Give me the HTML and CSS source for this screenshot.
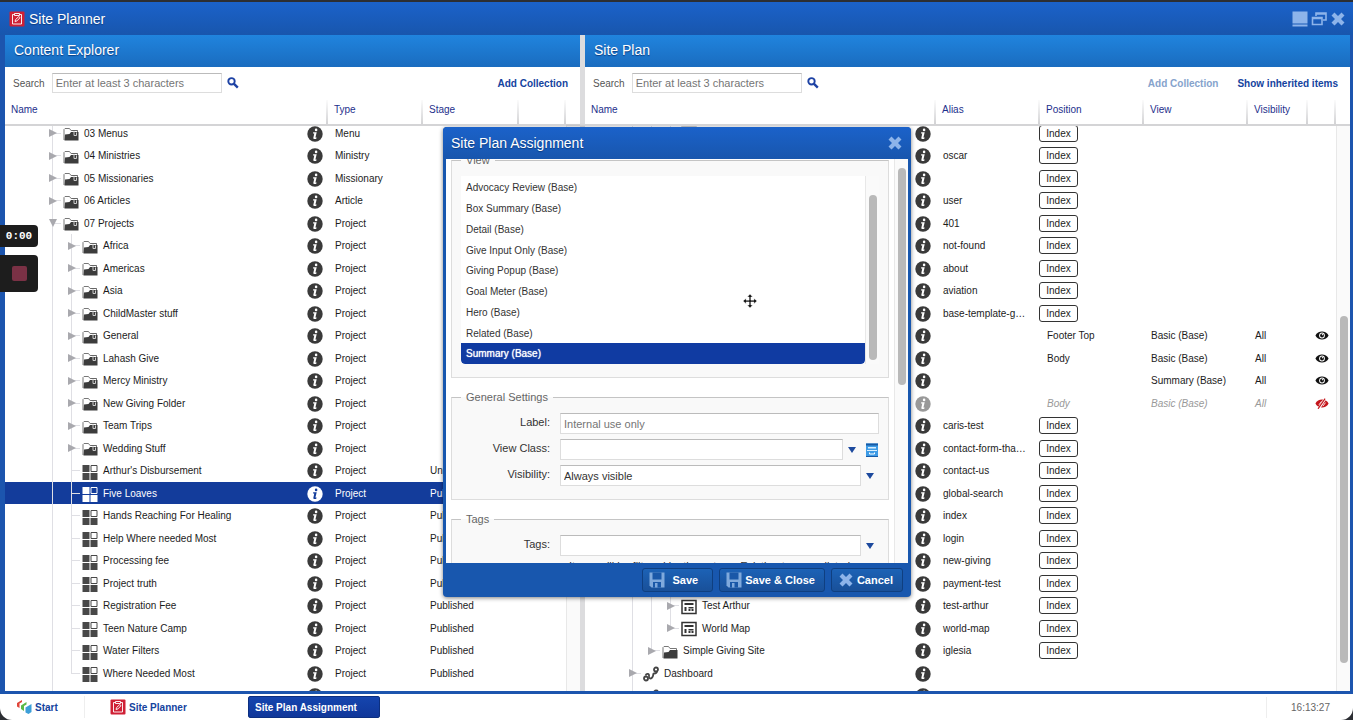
FILE: index.html
```html
<!DOCTYPE html>
<html lang="en">
  <head>
    <meta charset="UTF-8" />
    <meta name="viewport" content="width=device-width, initial-scale=1.0" />
    <title>Site Planner</title>
    <link rel="stylesheet" href="styles.css">
  </head>
  <body>
    <svg class="sprite" aria-hidden="true">
      <symbol id="i-info" viewBox="0 0 16 16">
        <circle class="disc" cx="8" cy="8" r="7.7" />
        <circle class="mark" cx="9.1" cy="3.9" r="1.3" />
        <path class="mark" d="M6.2 6.2h3.5l-1.3 5.4h1.2l-.3 1.1c-1 .5-3.2.5-3-.8l1-4.5H6z" />
      </symbol>
      <symbol id="i-folder" viewBox="0 0 16 16">
        <path d="M1 14V3.5L2 2.500h4.500L8 4.500h6.500V14" fill="#fff" stroke="#777" />
        <path d="M1.500 14.500L2 8.500l4.500-.5 1.500-2h7.500v8.500z" fill="#3c3c3c" />
      </symbol>
      <symbol id="i-collection" viewBox="0 0 16 16">
        <path d="M1 14V3.500L2 2.500h4.500L8 4.500h6.500V14" fill="#fff" stroke="#777" />
        <path d="M1.500 14.500L2 8.500l4.500-.5 1.500-2h7.500v8.500z" fill="#3c3c3c" />
        <path d="M9 4.500h5.500" stroke="#666" />
        <path d="M11 5v4.500h2.500v-3" fill="none" stroke="#ccc" />
      </symbol>
      <symbol id="i-item" viewBox="0 0 16 16">
        <path d="M.5 1h7v7h-7zM.5 9h7v7h-7zM8.500 9h7v7h-7z" fill="currentColor" />
        <path class="corner" d="M9 1.500h6v6H9z" stroke="currentColor" />
      </symbol>
      <symbol id="i-page" viewBox="0 0 16 16">
        <path d="M1 1.500h14v13H1z" fill="#fff" stroke="#333" stroke-width="1.500" />
        <path d="M3.500 4h9v2h-9zM3.500 8h2v4h-2zM7.500 8h5v1.500h-5zM7.500 10h2v2h-2zM10.500 10h2v2h-2z" fill="#333" />
      </symbol>
      <symbol id="i-link" viewBox="0 0 16 16">
        <g fill="none" stroke="#444" stroke-width="1.800">
          <circle cx="3" cy="12.500" r="2" /><circle cx="13" cy="3.500" r="2" />
          <path d="M2.500 9.500c1-2.500 4-2 3.500.5s2 3.500 3.500 1 0-3.500 1.500-3.500 3-.5 3-2.500" />
        </g>
      </symbol>
      <symbol id="i-eye" viewBox="0 0 16 12">
        <path d="M.5 6C3-.2 13-.2 15.500 6 13 12.200 3 12.200.5 6z" fill="#111" />
        <circle cx="8" cy="6" r="3.300" fill="#fff" />
        <circle cx="8" cy="6" r="2.200" fill="#111" /><circle cx="8.600" cy="5" r=".8" fill="#fff" />
      </symbol>
      <symbol id="i-eye-off" viewBox="0 0 16 12">
        <path d="M.5 6C3-.2 13-.2 15.500 6 13 12.200 3 12.200.5 6z" fill="#c4161c" />
        <path d="M4.500 7.500l3-4M9 9l3-4" stroke="#fff" stroke-width="1" />
        <path d="M3.500 13l9-14" stroke="#fff" stroke-width="3" />
        <path d="M3.500 12L11.500.5" stroke="#c4161c" stroke-width="1.400" />
      </symbol>
      <symbol id="i-search" viewBox="0 0 12 12">
        <circle cx="4.500" cy="4.300" r="3.200" fill="none" stroke="#1d42a4" stroke-width="1.900" />
        <path d="M6.800 6.600l4 4" stroke="#1d42a4" stroke-width="2.400" />
      </symbol>
      <symbol id="i-close" viewBox="0 0 16 16">
        <path d="M4.500 1.500L8 5l3.500-3.500 3 3L11 8l3.500 3.500-3 3L8 11l-3.500 3.500-3-3L5 8 1.500 4.500z" fill="#8db4ea" />
      </symbol>
      <symbol id="i-disk" viewBox="0 0 16 16">
        <path d="M.5.5h15v15h-13l-2-2z" fill="#7fa9dc" />
        <path d="M3.500.5h9v7h-9z" fill="#1a58a8" />
        <path d="M4 10h8v5.500H4z" fill="#1a58a8" /><path d="M6 11h2.500v4.500H6z" fill="#7fa9dc" />
      </symbol>
      <symbol id="i-planner" viewBox="0 0 16 16">
        <rect x=".5" y=".5" width="15" height="15" rx="1" fill="#cf2035" />
        <g fill="none" stroke="#fff" stroke-width=".9">
          <path d="M5.500 3.500H3.500v9.500h9V3.500h-2M5.500 2.500h5v2h-5z" /><path d="M6 10.500l.6-2L9.800 5.500l1.200 1.200L8 9.900z" />
        </g>
      </symbol>
      <symbol id="i-down" viewBox="0 0 10 8">
        <path d="M1 1h8L5 7z" fill="#1d4a9e" />
      </symbol>
    </svg>

    <main class="window">
      <header class="titlebar">
        <svg class="icon"><use href="#i-planner" /></svg>
        <h1>Site Planner</h1>
        <div class="window-buttons">
          <button type="button" aria-label="Minimize">
            <svg class="icon" viewBox="0 0 16 16"><path d="M.5.5h15v12H.5zM.5 13.500h15v2H.5z" fill="#8db4ea" /></svg>
          </button>
          <button type="button" aria-label="Restore">
            <svg class="icon" viewBox="0 0 16 16"><path d="M5 5V2h10v7h-3M1.500 6.500h9.500v7H1.500zM1.500 7.500h9.500M5 3h10" fill="none" stroke="#8db4ea" stroke-width="1.600" /></svg>
          </button>
          <button type="button" aria-label="Close">
            <svg class="icon"><use href="#i-close" /></svg>
          </button>
        </div>
      </header>

      <div class="panes">
        <section class="pane">
          <h2>Content Explorer</h2>
          <form class="toolbar">
            <label for="explorer-search">Search</label>
            <input id="explorer-search" type="text" placeholder="Enter at least 3 characters" />
            <button type="button" aria-label="Search"><svg><use href="#i-search" /></svg></button>
            <nav><a href="#">Add Collection</a></nav>
          </form>
          <div class="grid-area">
            <div class="scroller">
              <table>
                <colgroup>
                  <col /><col class="w95" /><col class="w96" /><col class="w47" />
                </colgroup>
                <thead>
                  <tr><th>Name</th><th>Type</th><th>Stage</th><th></th></tr>
                </thead>
                <tbody id="explorer-rows"></tbody>
              </table>
            </div>
            <div class="track"><div class="thumb explorer-thumb"></div></div>
          </div>
        </section>

        <section class="pane">
          <h2>Site Plan</h2>
          <form class="toolbar">
            <label for="plan-search">Search</label>
            <input id="plan-search" type="text" placeholder="Enter at least 3 characters" />
            <button type="button" aria-label="Search"><svg><use href="#i-search" /></svg></button>
            <nav>
              <a class="disabled" href="#">Add Collection</a>
              <a href="#">Show inherited items</a>
            </nav>
          </form>
          <div class="grid-area">
            <div class="scroller">
              <table>
                <colgroup>
                  <col /><col class="w104" /><col class="w104" /><col class="w104" /><col class="w60" /><col class="w28" />
                </colgroup>
                <thead>
                  <tr><th>Name</th><th>Alias</th><th>Position</th><th>View</th><th>Visibility</th><th></th></tr>
                </thead>
                <tbody id="plan-rows"></tbody>
              </table>
            </div>
            <div class="track"><div class="thumb plan-thumb"></div></div>
          </div>
        </section>
      </div>
    </main>

    <footer class="taskbar">
      <button type="button" class="start">
        <svg class="icon" viewBox="0 0 16 16">
          <path d="M1 6V4l5-3v2L3.500 4.500V9L1 7.500z" fill="#e0453a" />
          <path d="M5 9V6.500L10.500 3v2.500L8 7v5l-3-2z" fill="#5cb947" />
          <path d="M9.500 12V8.500L15.500 5v8l-3 2-3-1.500z" fill="#3d9fd8" />
        </svg>
        Start
      </button>
      <button type="button" class="task"><svg class="icon"><use href="#i-planner" /></svg>Site Planner</button>
      <button type="button" class="task active">Site Plan Assignment</button>
      <time>16:13:27</time>
    </footer>

    <div class="dialog" role="dialog" aria-labelledby="dialog-title">
      <header>
        <h2 id="dialog-title">Site Plan Assignment</h2>
        <button type="button" aria-label="Close"><svg class="icon"><use href="#i-close" /></svg></button>
      </header>
      <div class="dialog-body">
        <form class="settings" id="settings">
          <fieldset>
            <legend>View</legend>
            <div class="list">
              <select size="9" aria-label="View">
                <option>Advocacy Review (Base)</option>
                <option>Box Summary (Base)</option>
                <option>Detail (Base)</option>
                <option>Give Input Only (Base)</option>
                <option>Giving Popup (Base)</option>
                <option>Goal Meter (Base)</option>
                <option>Hero (Base)</option>
                <option>Related (Base)</option>
                <option selected>Summary (Base)</option>
              </select>
              <div class="track"><div class="thumb list-thumb"></div></div>
            </div>
          </fieldset>
          <fieldset>
            <legend>General Settings</legend>
            <div class="fields">
              <label for="label">Label:</label>
              <div class="field"><input id="label" type="text" placeholder="Internal use only" /></div>
              <label for="view-class">View Class:</label>
              <div class="field">
                <input id="view-class" type="text" />
                <svg class="down"><use href="#i-down" /></svg>
                <button type="button" aria-label="Browse classes">
                  <svg viewBox="0 0 14 16">
                    <path d="M1 1.500h12v13H1z" fill="#3d9be6" />
                    <path d="M1 1.500h12v2H1z" fill="#175aa6" />
                    <path d="M3 5h8v1.500H3zM2 8h10v1H2z" fill="#d9f0ff" />
                    <path d="M4.500 10.500v1.500h5v-1.500" fill="none" stroke="#fff" />
                    <path d="M1 14h12v1H1z" fill="#175aa6" />
                  </svg>
                </button>
              </div>
              <label for="visibility">Visibility:</label>
              <div class="field">
                <select id="visibility"><option>Always visible</option></select>
                <svg class="down"><use href="#i-down" /></svg>
              </div>
            </div>
          </fieldset>
          <fieldset>
            <legend>Tags</legend>
            <div class="fields">
              <label for="tags">Tags:</label>
              <div class="field">
                <input id="tags" type="text" />
                <svg class="down"><use href="#i-down" /></svg>
              </div>
              <p>Items will be filtered by these tags. Existing tags are listed.</p>
            </div>
          </fieldset>
        </form>
        <div class="track"><div class="thumb dialog-thumb"></div></div>
      </div>
      <footer>
        <button type="button" class="save"><svg class="icon"><use href="#i-disk" /></svg><span>Save</span></button>
        <button type="button"><svg class="icon"><use href="#i-disk" /></svg><span>Save &amp; Close</span></button>
        <button type="button"><svg class="icon"><use href="#i-close" /></svg><span>Cancel</span></button>
      </footer>
    </div>

    <svg class="pointer" viewBox="0 0 16 16" aria-hidden="true">
      <path d="M8 0l3 3.500H9V7h3.500V5L16 8l-3.500 3V9H9v3.500h2L8 16l-3-3.500h2V9H3.500v2L0 8l3.500-3v2H7V3.500H5z" fill="#111" stroke="#fff" stroke-width=".5" />
    </svg>

    <div class="recorder">
      <span>0:00</span>
      <button type="button" aria-label="Stop recording"></button>
    </div>

    <script src="script.js"></script>
  </body>
</html>
```
FILE: styles.css
```css
* {
  box-sizing: border-box;
  margin: 0;
}
html {
  height: 100%;
}
body {
  display: flex;
  flex-direction: column;
  position: relative;
  height: 100%;
  padding-top: 2px;
  overflow: hidden;
  background-color: #2c2e33;
  color: #1c1c1c;
  font-family: "Liberation Sans", Arial, sans-serif;
  font-size: 10px;
}
button,
input,
select {
  font: inherit;
  color: inherit;
}
button {
  border: 0;
  padding: 0;
  background: none;
}
a {
  color: #14439e;
  font-weight: bold;
  text-decoration: none;
}
h1,
h2 {
  font-size: 14px;
  font-weight: normal;
  color: #fff;
  text-shadow: 0 1px 1px #0b3c80;
}
.sprite {
  display: none;
}
.icon {
  display: block;
  flex: none;
  width: 16px;
  height: 16px;
}

/* main window */
.window {
  flex: 1;
  min-height: 0;
  display: flex;
  flex-direction: column;
  padding: 0 3px 3px 5px;
  background-color: #1c55ae;
}
.titlebar {
  display: flex;
  align-items: center;
  gap: 4px;
  height: 33px;
  margin: 0 -3px 0 -5px;
  padding: 0 7px 0 9px;
  background-image: linear-gradient(#1b62ca, #1856ad);
}
.window-buttons {
  display: flex;
  gap: 3px;
  margin-left: auto;
}
.panes {
  flex: 1;
  min-height: 0;
  display: grid;
  grid-template-columns: 575fr 765fr;
  gap: 5px;
  background-color: #dcdcde;
}
.pane {
  min-width: 0;
  min-height: 0;
  display: flex;
  flex-direction: column;
  background-color: #fff;
}
.pane h2 {
  flex: none;
  height: 32px;
  padding: 0 9px;
  line-height: 31px;
  background-image: linear-gradient(#2084de, #1a6cbf);
}
.toolbar {
  flex: none;
  display: flex;
  align-items: center;
  height: 32px;
  margin-bottom: 1px;
  padding: 0 12px 0 8px;
  color: #555;
}
.toolbar input {
  width: 170px;
  height: 20px;
  margin: 0 5px 0 7px;
}
.toolbar svg {
  display: block;
  width: 12px;
  height: 12px;
}
.toolbar nav {
  display: flex;
  gap: 19px;
  margin-left: auto;
}
.disabled {
  color: #86a3cc;
}
input,
.field select {
  min-width: 0;
  padding: 0 3px;
  border: 1px solid #ddd;
  border-top-color: #bbb;
  border-radius: 0;
  background-color: #fff;
  font-size: 11px;
}
input::placeholder {
  color: #757575;
  opacity: 1;
}

/* tree tables */
.grid-area {
  flex: 1;
  min-height: 0;
  display: flex;
  background-image: linear-gradient(#d4d4d6, #d4d4d6);
  background-size: 100% 2px;
  background-position: 0 24px;
  background-repeat: no-repeat;
}
.scroller {
  flex: 1;
  min-width: 0;
  overflow: hidden;
}
table {
  width: 100%;
  table-layout: fixed;
  border-collapse: separate;
  border-spacing: 0;
}
.w28 {
  width: 28px;
}
.w47 {
  width: 47px;
}
.w60 {
  width: 60px;
}
.w95 {
  width: 95px;
}
.w96 {
  width: 96px;
}
.w104 {
  width: 104px;
}
th {
  position: sticky;
  top: 0;
  z-index: 1;
  height: 26px;
  padding: 0 6px 6px;
  border-bottom: 2px solid #d4d4d6;
  border-right: 2px solid;
  border-image: linear-gradient(#fff, #d4d4d6 90%) 2;
  background-color: #fff;
  color: #1d2f8c;
  font-weight: normal;
  text-align: left;
}
td {
  height: 22px;
  padding: 0 0 0 7px;
  white-space: nowrap;
}
tr:nth-child(even) td {
  height: 23px;
}
td:first-child {
  padding: 0;
}
.tree {
  display: flex;
  align-items: center;
  height: 100%;
  padding: 0 5px 0 38px;
}
.guide {
  align-self: stretch;
  display: grid;
  place-items: center;
  width: 19px;
  background: linear-gradient(#dfdfe4, #dfdfe4) 9px 0 / 1px 100% no-repeat;
}
.guide.branch {
  background:
    linear-gradient(#dfdfe4, #dfdfe4) 9px 0 / 1px 100% no-repeat,
    linear-gradient(#dfdfe4, #dfdfe4) 9px 50% / 9px 1px no-repeat;
}
.guide.end {
  background-size: 1px 50%, 9px 1px;
}
.guide svg {
  width: 10px;
  height: 10px;
  fill: #a9a9ae;
}
.open svg {
  transform: rotate(90deg);
}
.tree .icon {
  margin: 2px 5px 0 1px;
  color: #484848;
}
.tree .info {
  margin: 1px 0 0 auto;
}
tr {
  --disc: #3a3a3a;
  --paper: #fff;
}
.corner,
.mark {
  fill: var(--paper);
}
.disc {
  fill: var(--disc);
}
.selected {
  --disc: #fff;
  --paper: #133c9b;
  background-color: #133c9b;
  color: #fff;
}
.selected .tree .icon {
  color: #fff;
}
.inactive {
  --disc: #999;
  color: #999;
  font-style: italic;
}
.index {
  width: 39px;
  height: 17px;
  margin-left: -8px;
  border: 1px solid #333;
  border-radius: 3px;
  line-height: 15px;
  vertical-align: middle;
}
.eye {
  display: block;
  width: 14px;
  height: 11px;
}

/* scrollbars */
.track {
  flex: none;
  width: 14px;
  border-left: 1px solid #e8e8e8;
  background-color: #fafafa;
}
.grid-area .track {
  margin-top: 26px;
}
.thumb {
  width: 8px;
  margin-left: 3px;
  border-radius: 4px;
  background-color: #b9b9b9;
}
.explorer-thumb {
  height: 200px;
  margin-top: 180px;
}
.plan-thumb {
  height: 347px;
  margin-top: 190px;
}
.list-thumb {
  height: 165px;
  margin-top: 19px;
}
.dialog-thumb {
  height: 217px;
  margin-top: 9px;
}

/* taskbar */
.taskbar {
  flex: none;
  display: flex;
  align-items: center;
  height: 26px;
  border-radius: 0 0 12px 12px;
  background-color: #fff;
  color: #14439e;
}
.taskbar button {
  display: flex;
  align-items: center;
  gap: 3px;
  height: 22px;
  font-weight: bold;
}
.start {
  width: 85px;
  padding-left: 16px;
  border-right: 1px solid #eee;
}
.task {
  width: 132px;
  margin-left: 5px;
  padding-left: 20px;
}
.taskbar .active {
  margin-left: 26px;
  padding-left: 6px;
  border: 1px solid #0c2f80;
  border-radius: 2px;
  background-image: linear-gradient(#1545ae, #10379a);
  color: #fff;
}
.taskbar time {
  margin-left: auto;
  padding: 5px 23px 5px 24px;
  border-left: 1px solid #eee;
  color: #666;
}

/* assignment dialog */
.dialog {
  position: absolute;
  top: 127px;
  left: 1px;
  right: 0;
  display: flex;
  flex-direction: column;
  width: 468px;
  height: 470px;
  margin: 0 auto;
  border-radius: 4px;
  background-color: #1857ae;
  box-shadow: 0 1px 4px rgba(0, 0, 0, 0.5);
}
.dialog > header {
  display: flex;
  align-items: center;
  justify-content: space-between;
  height: 32px;
  padding: 0 8px;
  border-radius: 4px 4px 0 0;
  background-image: linear-gradient(#1b62ca, #1856ad);
}
.dialog-body {
  flex: 1;
  min-height: 0;
  display: flex;
  margin: 0 3px;
  background-color: #fff;
}
.settings {
  flex: 1;
  overflow: hidden;
  padding: 4px 5px 40px;
  font-size: 11px;
  color: #333;
}
fieldset {
  margin-bottom: 12px;
  padding: 9px 9px 13px;
  border: 1px solid #ddd;
  border-top-color: #c4c4c4;
  background-color: #f9f9f9;
}
legend {
  padding: 0 5px;
  line-height: 14px;
  color: #666;
}
.list {
  display: flex;
  height: 188px;
}
.list select {
  flex: 1;
  min-width: 0;
  height: 188px;
  padding: 1px 0 0;
  border: 0;
  border-radius: 0 0 4px 4px;
  background-color: #fff;
  font-size: 10px;
  overflow: hidden;
  scrollbar-width: none;
}
.list option {
  height: 21px;
  min-height: 0;
  padding: 5px 5px 0;
}
.list option:nth-child(4n) {
  height: 20px;
}
.list option:checked {
  border-radius: 0 0 4px 4px;
  background: linear-gradient(#103ba2, #103ba2);
  -webkit-text-fill-color: #fff;
  text-shadow: 0 0 1px #fff;
}
.fields {
  display: grid;
  grid-template-columns: 89px 1fr;
  gap: 5px 10px;
}
.fields label {
  line-height: 19px;
  text-align: right;
}
.fields p {
  grid-column: 2;
  padding-left: 9px;
  line-height: 10px;
}
.field {
  display: flex;
  align-items: center;
  height: 21px;
}
.field input,
.field select {
  flex: 1;
  height: 21px;
}
.field select {
  appearance: none;
}
.field .down {
  width: 10px;
  height: 8px;
  margin: 0 4px;
}
.field button {
  width: 14px;
  height: 16px;
  margin-left: 4px;
}
.dialog > footer {
  display: flex;
  justify-content: flex-end;
  gap: 6px;
  padding: 5px 8px;
}
.dialog > footer button {
  display: flex;
  align-items: center;
  gap: 3px;
  height: 24px;
  padding: 0 9px 0 6px;
  border: 1px solid #0f3f80;
  border-radius: 3px;
  background-image: linear-gradient(#1c62b6, #195099);
  color: #fff;
  font-size: 11px;
  font-weight: bold;
}
.save span {
  padding: 0 5px;
}

/* things floating over everything */
.pointer {
  position: absolute;
  top: 294px;
  left: 743px;
  width: 14px;
  height: 14px;
}
.recorder {
  position: absolute;
  top: 225px;
  left: 0;
  display: grid;
  gap: 8px;
  width: 38px;
}
.recorder span,
.recorder button {
  border-radius: 0 4px 4px 0;
  background-color: #1d1d1d;
}
.recorder span {
  color: #fff;
  font: bold 11px/22px "Liberation Mono", monospace;
  text-align: center;
}
.recorder button {
  display: grid;
  place-items: center;
  height: 37px;
}
.recorder button::before {
  content: "";
  width: 15px;
  height: 15px;
  border-radius: 2px;
  background-color: #7a3145;
}
```
FILE: script.js
```js
(() => {
  // [level, icon, name, arrow, type, stage]
  const explorer = [
    [1, "collection", "03 Menus", "closed", "Menu"],
    [1, "collection", "04 Ministries", "closed", "Ministry"],
    [1, "collection", "05 Missionaries", "closed", "Missionary"],
    [1, "collection", "06 Articles", "closed", "Article"],
    [1, "collection", "07 Projects", "open", "Project"],
    [2, "collection", "Africa", "closed", "Project"],
    [2, "collection", "Americas", "closed", "Project"],
    [2, "collection", "Asia", "closed", "Project"],
    [2, "collection", "ChildMaster stuff", "closed", "Project"],
    [2, "collection", "General", "closed", "Project"],
    [2, "collection", "Lahash Give", "closed", "Project"],
    [2, "collection", "Mercy Ministry", "closed", "Project"],
    [2, "collection", "New Giving Folder", "closed", "Project"],
    [2, "collection", "Team Trips", "closed", "Project"],
    [2, "collection", "Wedding Stuff", "closed", "Project"],
    [2, "item", "Arthur's Disbursement", "", "Project", "Unpublished"],
    [2, "item", "Five Loaves", "", "Project", "Published"],
    [2, "item", "Hands Reaching For Healing", "", "Project", "Published"],
    [2, "item", "Help Where needed Most", "", "Project", "Published"],
    [2, "item", "Processing fee", "", "Project", "Published"],
    [2, "item", "Project truth", "", "Project", "Published"],
    [2, "item", "Registration Fee", "", "Project", "Published"],
    [2, "item", "Teen Nature Camp", "", "Project", "Published"],
    [2, "item", "Water Filters", "", "Project", "Published"],
    [2, "item", "Where Needed Most", "", "Project", "Published"],
    [1, "collection", "", "closed", ""],
  ];

  // [level, icon, name, arrow, alias, position, view, visibility]
  const plan = [
    [3, "page", "", "closed", "", "Index"],
    [3, "page", "", "closed", "oscar", "Index"],
    [3, "page", "", "closed", "", "Index"],
    [3, "page", "", "closed", "user", "Index"],
    [3, "page", "", "closed", "401", "Index"],
    [3, "page", "", "closed", "not-found", "Index"],
    [3, "page", "", "closed", "about", "Index"],
    [3, "page", "", "closed", "aviation", "Index"],
    [3, "page", "", "open", "base-template-g…", "Index"],
    [4, "item", "", "", "", "Footer Top", "Basic (Base)", "All"],
    [4, "item", "", "", "", "Body", "Basic (Base)", "All"],
    [4, "item", "", "", "", "", "Summary (Base)", "All"],
    [4, "item", "", "", "", "Body", "Basic (Base)", "All"],
    [3, "page", "", "closed", "caris-test", "Index"],
    [3, "page", "", "closed", "contact-form-tha…", "Index"],
    [3, "page", "", "closed", "contact-us", "Index"],
    [3, "page", "", "closed", "global-search", "Index"],
    [3, "page", "", "closed", "index", "Index"],
    [3, "page", "", "closed", "login", "Index"],
    [3, "page", "", "closed", "new-giving", "Index"],
    [3, "page", "", "closed", "payment-test", "Index"],
    [3, "page", "Test Arthur", "closed", "test-arthur", "Index"],
    [3, "page", "World Map", "closed", "world-map", "Index"],
    [2, "folder", "Simple Giving Site", "closed", "iglesia", "Index"],
    [1, "link", "Dashboard", "closed", ""],
    [1, "link", "", "closed", ""],
  ];

  const selectedRow = 16;
  const inactiveRow = 12;

  function treeCell(rows, i) {
    const [level, icon, name, arrow] = rows[i];
    const next = rows[i + 1];
    const end = next && next[0] < level ? " end" : "";
    const head = arrow ? '<svg viewBox="0 0 10 10"><path d="M1 1l8 4-8 4z"/></svg>' : "";
    return `<td><div class="tree">${'<span class="guide"></span>'.repeat(level - 1)}
      <span class="guide branch ${arrow}${end}">${head}</span>
      <svg class="icon"><use href="#i-${icon}"/></svg>${name}
      <svg class="icon info"><use href="#i-info"/></svg></div></td>`;
  }

  function cell(text) {
    return `<td>${text || ""}</td>`;
  }

  document.querySelector("#explorer-rows").innerHTML = explorer
    .map((row, i) => {
      const cls = i === selectedRow ? ' class="selected"' : "";
      return `<tr${cls}>${treeCell(explorer, i)}${cell(row[4])}${cell(row[5])}<td></td></tr>`;
    })
    .join("");

  document.querySelector("#plan-rows").innerHTML = plan
    .map((row, i) => {
      const off = i === inactiveRow;
      const position =
        row[5] === "Index" ? '<button type="button" class="index">Index</button>' : row[5];
      const eye = row[7]
        ? `<svg class="eye"><use href="#i-eye${off ? "-off" : ""}"/></svg>`
        : "";
      return `<tr${off ? ' class="inactive"' : ""}>${treeCell(plan, i)}${cell(row[4])}
        ${cell(position)}${cell(row[6])}${cell(row[7])}${cell(eye)}</tr>`;
    })
    .join("");

  document.querySelectorAll(".scroller").forEach((elem) => (elem.scrollTop = 4));
  document.querySelector("#settings").scrollTop = 10;
})();
```
